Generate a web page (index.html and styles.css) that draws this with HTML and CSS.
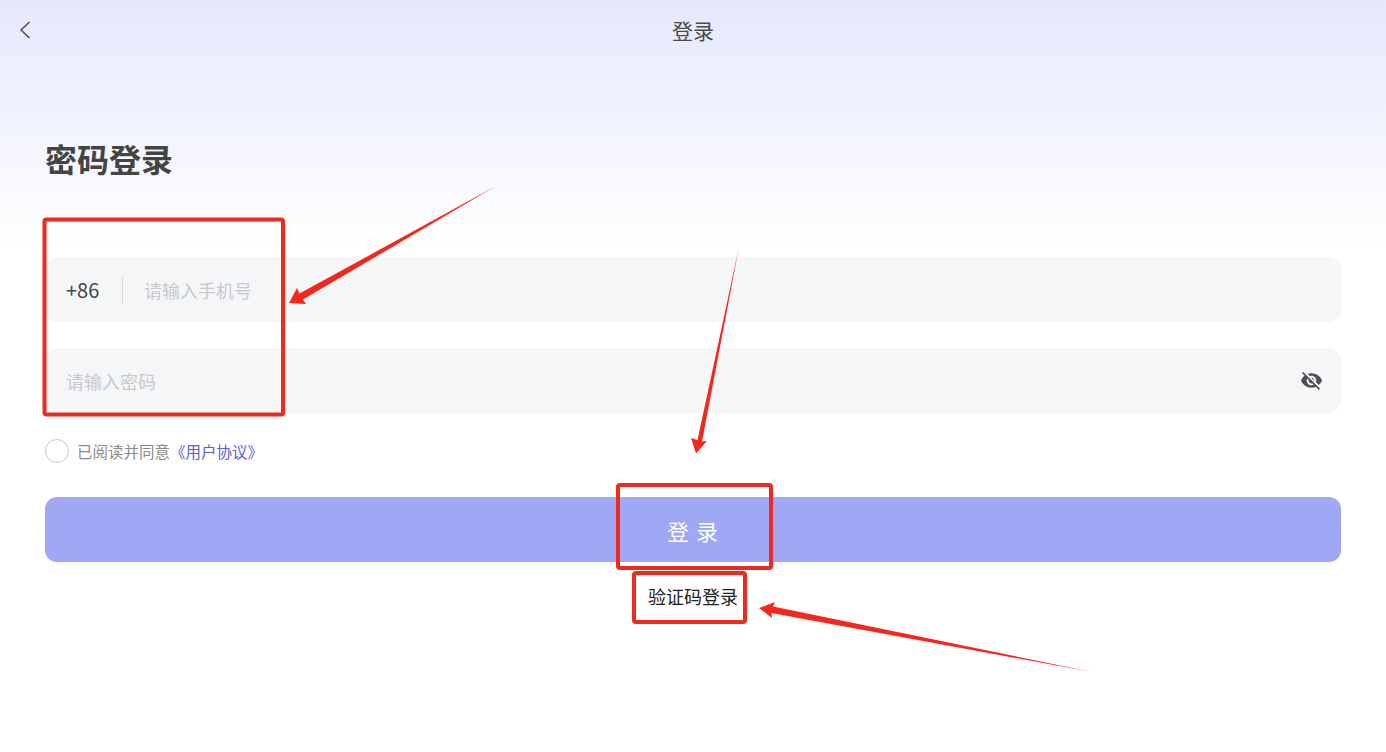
FILE: index.html
```html
<!DOCTYPE html>
<html lang="zh-CN">
<head>
<meta charset="utf-8">
<title>登录</title>
<link rel="stylesheet" href="styles.css">
</head>
<body>
<div class="page">
  <header class="topbar">
    <svg class="back" viewBox="0 0 12 18" width="12" height="18" aria-hidden="true"><path d="M10.5 1 2 9l8.500 8" fill="none" stroke="#4a4a4a" stroke-width="1.500"/></svg>
    <div class="topbar-title">登录</div>
  </header>
  <main class="content">
    <h1 class="heading">密码登录</h1>
    <div class="field field-first">
      <span class="code">+86</span>
      <span class="divider"></span>
      <span class="placeholder">请输入手机号</span>
    </div>
    <div class="field field-second">
      <span class="placeholder">请输入密码</span>
      <svg class="eye" viewBox="0 0 24 24" width="23" height="23" aria-hidden="true"><path fill="#4d4f52" d="M12 7c2.760 0 5 2.240 5 5 0 .65-.13 1.260-.36 1.830l2.920 2.920c1.510-1.260 2.700-2.890 3.430-4.750-1.730-4.390-6-7.500-11-7.500-1.400 0-2.740.25-3.980.7l2.160 2.160C10.740 7.130 11.350 7 12 7zM2 4.270l2.280 2.280.46.46C3.080 8.300 1.780 10.020 1 12c1.730 4.390 6 7.500 11 7.500 1.550 0 3.030-.3 4.380-.84l.42.42L19.730 22 21 20.730 3.270 3 2 4.270zM7.530 9.800l1.550 1.550c-.05.21-.08.43-.08.65 0 1.660 1.340 3 3 3 .22 0 .44-.03.65-.08l1.550 1.550c-.67.33-1.410.53-2.200.53-2.760 0-5-2.240-5-5 0-.79.2-1.530.53-2.200zm4.310-.78l3.150 3.150.02-.16c0-1.660-1.340-3-3-3l-.17.01z"/></svg>
    </div>
    <div class="agree">
      <span class="radio"></span>
      <span class="agree-text">已阅读并同意<a class="agree-link">《用户协议》</a></span>
    </div>
    <button class="submit" type="button">登 录</button>
    <div class="switch">验证码登录</div>
  </main>
  <svg class="marks" viewBox="0 0 1386 752" width="1386" height="752" aria-hidden="true">
    <rect class="mark-box" x="44.500" y="219.500" width="238.500" height="195" rx="2"/>
    <rect class="mark-box" x="618" y="485" width="153" height="83" rx="2"/>
    <rect class="mark-box" x="634" y="573" width="111" height="49" rx="2"/>
    <polygon class="mark-arrow" points="289,303 297,288 299.500,293.500 496,186 303,299.500 306,304"/>
    <polygon class="mark-arrow" points="696,453.500 691,438 697.500,440 739,247 702,441.500 707,441"/>
    <polygon class="mark-arrow" points="759,608 775,602 773,606.500 1092,672 771.500,613 772,618"/>
  </svg>
</div>
</body>
</html>
```

FILE: styles.css
```css
* { box-sizing: border-box; }
html, body { margin: 0; padding: 0; }
body {
  font-family: "Noto Sans CJK SC", "Noto Sans", sans-serif;
  background: #fff;
}
.page {
  position: relative;
  width: 1386px;
  height: 752px;
  overflow: hidden;
  background: linear-gradient(180deg, #e5e8fd 0, #ffffff 250px);
}
.topbar {
  position: relative;
  height: 60px;
  display: flex;
  align-items: center;
  justify-content: center;
}
.back {
  position: absolute;
  left: 19px;
  top: 21px;
}
.topbar-title {
  font-size: 21px;
  line-height: 30px;
  color: #4a4a4a;
}
.content {
  padding: 0 45px;
  display: flex;
  flex-direction: column;
}
.heading {
  margin: 75px 0 0;
  font-size: 32px;
  line-height: 46px;
  font-weight: 700;
  color: #444;
}
.field {
  height: 65px;
  border-radius: 13px;
  background: #f5f6f8;
  display: flex;
  align-items: center;
  padding: 0 21px;
}
.field-first { margin-top: 76px; }
.field-second {
  margin-top: 26px;
  justify-content: space-between;
  padding-right: 18px;
}
.code {
  font-size: 20px;
  color: #444;
  width: 35px;
}
.divider {
  width: 1px;
  height: 26px;
  background: #d5d7da;
  margin: 0 21px;
}
.placeholder {
  font-size: 18px;
  color: #c6c9ce;
}
.agree {
  margin-top: 26px;
  height: 24px;
  display: flex;
  align-items: center;
  gap: 8px;
}
.radio {
  width: 24px;
  height: 24px;
  border-radius: 50%;
  border: 1.500px solid #c9c9c9;
  background: #fff;
}
.agree-text {
  font-size: 15.500px;
  color: #8a8a8a;
}
.agree-link { color: #5561d8; }
.submit {
  margin: 34px 0 0;
  height: 65px;
  border: 0;
  border-radius: 12px;
  background: #a0a7f4;
  color: #fff;
  font-family: inherit;
  font-size: 22px;
  letter-spacing: 1px;
  padding: 0;
}
.switch {
  margin-top: 20px;
  text-align: center;
  font-size: 18px;
  line-height: 28px;
  color: #222;
}
.marks {
  position: absolute;
  left: 0;
  top: 0;
  pointer-events: none;
}
.mark-box {
  fill: none;
  stroke: #ee2a20;
  stroke-width: 4;
}
.mark-arrow { fill: #f5261c; }
```
